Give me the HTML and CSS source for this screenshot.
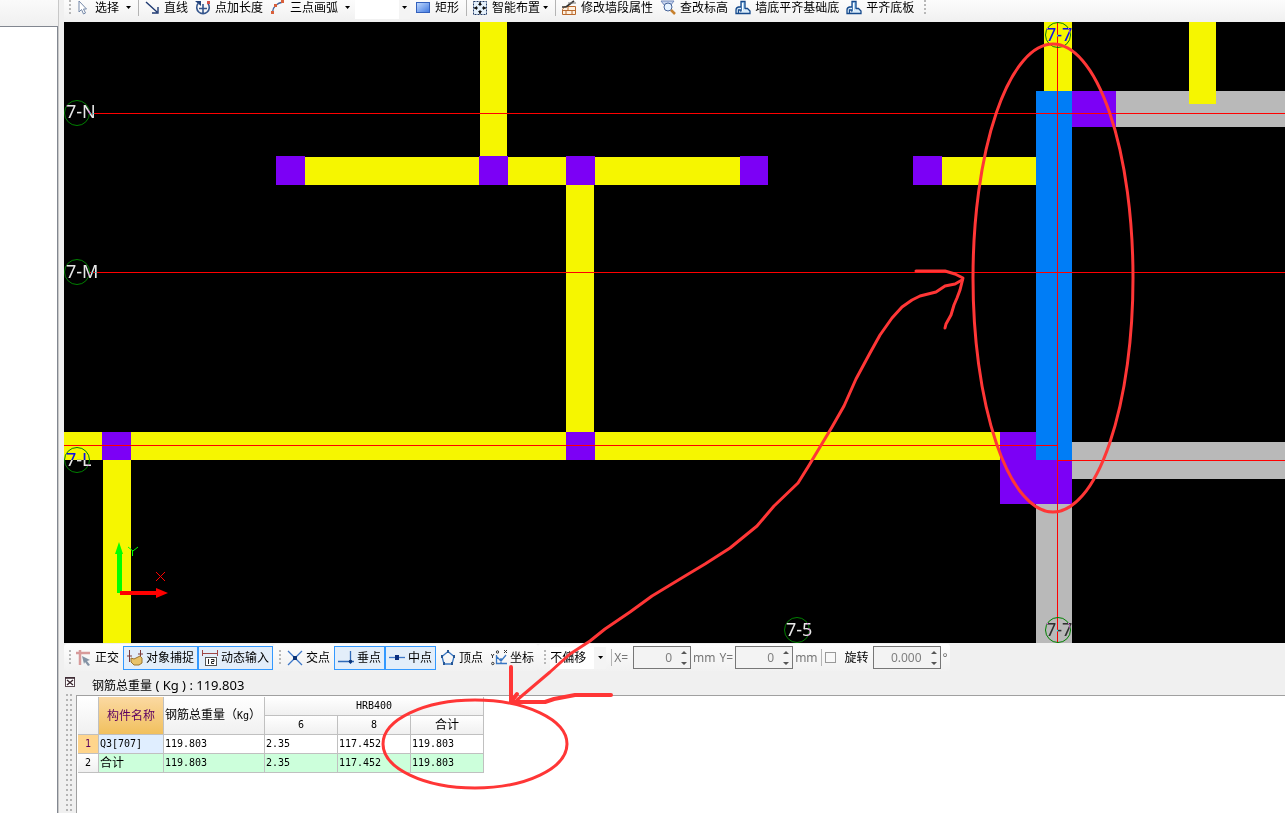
FILE: index.html
```html
<!DOCTYPE html>
<html lang="zh-CN">
<head>
<meta charset="utf-8">
<title>钢筋总重量</title>
<link rel="stylesheet" href="styles.css">
</head>
<body>
<svg class="defs" aria-hidden="true">
  <defs>
    <linearGradient id="blueFill" x1="0" y1="0" x2="1" y2="1"><stop offset="0" stop-color="#c4dcff"/><stop offset="1" stop-color="#3f78e0"/></linearGradient>
    <symbol id="align" viewBox="0 0 16 16"><path d="M6 1.500h4v11.500H6z" fill="#a9d2f4" stroke="#15498c" stroke-width="1.300"/><path d="M6 7H3.500Q1 7.500 1 10v3.500h2.500V10H6M10 8.500h2.500L15 11v2.500H4" fill="#d8ebfa" stroke="#15498c" stroke-width="1.300"/><path d="M7.500 3v8" stroke="#fff"/></symbol>
    <symbol id="spin" viewBox="0 0 8 16"><path d="M1 4l3-3 3 3zM1 12l3 3 3-3z" fill="#555"/></symbol>
  </defs>
</svg>
<div class="app">
  <aside class="side"><div class="side-head"></div><div class="side-body"></div></aside>
  <main class="main">
    <div class="bar top-bar" role="toolbar" aria-label="绘图">
      <span class="grip"></span>
      <button class="tool"><svg class="icon" viewBox="0 0 16 16"><path d="M4 1v11l2.500-2.500 2 4.500 2-1-2-4h3z" fill="#fff" stroke="#7488a8"/></svg>选择<i class="caret"></i></button>
      <span class="sep"></span>
      <button class="tool"><svg class="icon" viewBox="0 0 16 16"><path d="M2 2l11 10M14 7v6H8" fill="none" stroke="#1f3a72" stroke-width="1.400"/></svg>直线</button>
      <button class="tool"><svg class="icon" viewBox="0 0 16 16"><path d="M3 3.500a6.300 6.300 0 1 0 10 0M8 4v9M4 8.500h8" fill="none" stroke="#34558c" stroke-width="1.600"/><path d="M0 1h6v5z" fill="#23437c"/><path d="M12 1h3v3h-3z" fill="#d6524a"/></svg>点加长度</button>
      <button class="tool"><svg class="icon" viewBox="0 0 16 16"><path d="M2.500 12C3 7 7 3 13 2" fill="none" stroke="#44639c" stroke-width="1.500"/><path d="M1 11h3v3H1zM4 4h3v3H4zM11 0h3v3h-3z" fill="#d9603c"/></svg>三点画弧<i class="caret far"></i></button>
      <span class="combo blank"><select aria-label="画法"><option></option></select><i class="caret"></i></span>
      <button class="tool"><svg class="icon" viewBox="0 0 16 16"><rect x="1.500" y="2.500" width="13" height="10" fill="url(#blueFill)" stroke="#3461bd"/></svg>矩形</button>
      <span class="sep"></span>
      <button class="tool"><svg class="icon" viewBox="0 0 16 16"><rect x="1.500" y="1.500" width="13" height="13" fill="#e4f0fb" stroke="#223b66" stroke-dasharray="2 1"/><path d="M8 2v4M8 10v4M2 8h4M10 8h4" stroke="#111"/><path d="M6 5l2-3 2 3zM6 11l2 3 2-3zM5 6L2 8l3 2zM11 6l3 2-3 2z" fill="#111"/></svg>智能布置<i class="caret"></i></button>
      <span class="sep"></span>
      <button class="tool"><svg class="icon" viewBox="0 0 16 16"><path d="M3.500 6.500h11v8h-13v-5zM2 10.500h12M7 7v3M11 11v3M5 11v3" fill="#fff1e0" stroke="#b9692c"/><path d="M1 7h4l8-6" fill="none" stroke="#333" stroke-width="1.700"/><path d="M7 3h8" stroke="#777"/></svg>修改墙段属性</button>
      <button class="tool"><svg class="icon" viewBox="0 0 16 16"><path d="M1 1h13l-4 5H5z" fill="#c7d4ee" stroke="#7089bb"/><circle cx="8" cy="7" r="4" fill="#e7f3ff" stroke="#456398"/><path d="M11 10l4 4" stroke="#c7802c" stroke-width="2.500"/></svg>查改标高</button>
      <button class="tool"><svg class="icon"><use href="#align"/></svg>墙底平齐基础底</button>
      <button class="tool"><svg class="icon"><use href="#align"/></svg>平齐底板</button>
      <span class="grip tail"></span>
    </div>

    <svg class="canvas" role="img" aria-label="墙平面图">
      <g transform="translate(-64 -22)">
        <g fill="#f6f600">
          <path d="M480 22h27v135h-27zM276 157h492v28H276zM566 157h28v303h-28zM64 432h972v28H64zM103 432h28v260h-28zM913 157h123v28H913zM1044 22h28v70h-28z"/>
        </g>
        <g fill="#b9b9b9"><path d="M1116 91h2400v36H1116zM1072 442h2400v37H1072zM1036 504h36v200h-36z"/></g>
        <path d="M1189 22h27v82h-27z" fill="#f6f600"/>
        <path d="M276 156h29v29h-29zM479 156h29v29h-29zM566 156h29v29h-29zM740 156h28v29h-28zM913 156h29v29h-29zM102 432h29v28h-29zM566 432h29v28h-29zM1072 91h44v36h-44zM1000 432h72v72h-72z" fill="#7c00f6"/>
        <path d="M1036 91h36v369h-36z" fill="#007df6"/>
        <path d="M89 113.500H3500M89 272.500H3500M64 445.500H1057M1057 460.500H3500M1057.500 22V700" fill="none" stroke="#f00"/>
        <g fill="none" stroke="#008000">
          <circle cx="77" cy="113" r="12.500"/><circle cx="77" cy="272" r="12.500"/><circle cx="77" cy="460" r="12.500"/>
          <circle cx="1058" cy="35" r="12.500"/><circle cx="1058" cy="630" r="12.500"/><circle cx="797" cy="630" r="12.500"/>
        </g>
        <g class="axis-label">
          <text x="66" y="118">7-N</text><text x="66" y="278">7-M</text><text x="66" y="466">7-L</text>
          <text x="1046" y="41">7-7</text><text x="1046" y="636">7-7</text><text x="786" y="636">7-5</text>
        </g>
        <path d="M117 593v-39h-2l4-12 4 12h-1v39z" fill="#0f0"/>
        <path d="M120 591h36v-3l12 5-12 5v-3h-36z" fill="#f00"/>
        <path d="M128 547l5 4 5-4M132.500 551v5" fill="none" stroke="#0f0"/>
        <path d="M156 572l9 9M165 572l-9 9" stroke="#f00"/>
      </g>
    </svg>

    <div class="bar snap-bar" role="toolbar" aria-label="捕捉">
      <div class="group">
        <span class="grip"></span>
        <button class="tool"><svg class="icon" viewBox="0 0 16 16"><path d="M0 3h14M4 0v15" stroke="#d79a9a" stroke-width="2.500"/><path d="M6 6l8 4-3 1 3 4-2 1-3-4-1 2z" fill="#8493a5"/></svg>正交</button>
        <button class="tool on" aria-pressed="true"><svg class="icon" viewBox="0 0 16 16"><path d="M2.500 0v12M13.500 0v7M0 6h5M11 4h5" stroke="#7d3a3a"/><path d="M4 8l3 1 6-3 2 2v5l-3 2H7l-3-3z" fill="#e8c36a" stroke="#9a7431"/></svg>对象捕捉</button>
        <button class="tool on" aria-pressed="true"><svg class="icon" viewBox="0 0 16 16"><path d="M.500 0v6M15.500 0v6M0 3.500h16" stroke="#a04848"/><rect x="3.500" y="7.500" width="11" height="8" fill="#fff" stroke="#555"/><path d="M6.500 9v5M9 9.500h3v2H9.500v2H12" fill="none" stroke="#222"/></svg>动态输入</button>
      </div>
      <div class="group">
        <span class="grip"></span>
        <button class="tool"><svg class="icon" viewBox="0 0 16 16"><path d="M1 1l14 14M15 1L1 15" stroke="#3d77c8" stroke-width="1.300"/><rect x="6" y="6" width="4" height="4" fill="#0b3478"/></svg>交点</button>
        <button class="tool on" aria-pressed="true"><svg class="icon" viewBox="0 0 16 16"><path d="M0 11.500h16M12.500 1v13" stroke="#2e69b8" stroke-width="1.300"/><circle cx="12.500" cy="11.500" r="1.800" fill="#0b3478"/></svg>垂点</button>
        <button class="tool on" aria-pressed="true"><svg class="icon" viewBox="0 0 16 16"><path d="M0 7.500h16" stroke="#3d77c8" stroke-width="1.300"/><rect x="6" y="5" width="4" height="5" fill="#0b2f80"/></svg>中点</button>
        <button class="tool"><svg class="icon" viewBox="0 0 16 16"><path d="M8 1.500l6 5L12 14H4L2 6.500z" fill="none" stroke="#3977c3" stroke-width="1.300"/><path d="M7 0h2v3H7zM1 5h2v3H1zM13 5h2v3h-2zM3 12h2v3H3zM11 12h2v3h-2z" fill="#265795"/></svg>顶点</button>
        <button class="tool"><svg class="icon" viewBox="0 0 16 16"><path d="M5.500 5v8.500H16M5 6l5 5 5-6M10 8v5" fill="none" stroke="#3977c3" stroke-width="1.300"/><path d="M0 4l1.500 2L3 4M1.500 6v2M13 0l3 3M16 0l-3 3" fill="none" stroke="#333"/><circle cx="6.500" cy="2" r="1.200" fill="none" stroke="#333"/><circle cx="1.800" cy="13.500" r="1.200" fill="none" stroke="#333"/></svg>坐标</button>
      </div>
      <div class="group">
        <span class="grip"></span>
        <span class="combo offset"><select aria-label="偏移方式"><option>不偏移</option></select><i class="caret"></i></span>
        <span class="sep"></span>
        <label class="unit first" for="dx">X=</label>
        <span class="spin"><input id="dx" value="0" disabled><svg class="arrows" aria-hidden="true"><use href="#spin"/></svg></span>
        <span class="unit">mm</span>
        <label class="unit" for="dy">Y=</label>
        <span class="spin"><input id="dy" value="0" disabled><svg class="arrows" aria-hidden="true"><use href="#spin"/></svg></span>
        <span class="unit">mm</span>
        <span class="sep tight"></span>
        <label class="check"><input type="checkbox" disabled>旋转</label>
        <span class="spin wide"><input id="angle" aria-label="旋转角度" value="0.000" disabled><svg class="arrows" aria-hidden="true"><use href="#spin"/></svg></span>
        <span class="unit">°</span>
      </div>
    </div>

    <section class="dock">
      <div class="rail">
        <button class="close" aria-label="关闭"><svg viewBox="0 0 10 10"><rect x=".500" y=".500" width="9" height="9" fill="#fff" stroke="#5a4a52"/><path d="M2 3l6 5M8 3L2 8M0 1h10" stroke="#3b2730" stroke-width="1.400"/></svg></button>
        <div class="dots"></div>
      </div>
      <div class="panel">
        <h1 class="summary">钢筋总重量<span class="amount"> ( Kg ) : 119.803</span></h1>
        <div class="sheet">
          <table>
            <colgroup><col class="c-no"><col class="c-name"><col class="c-sum"><col class="c-val"><col class="c-val"><col class="c-val"></colgroup>
            <thead>
              <tr><th rowspan="2"></th><th rowspan="2" class="picked">构件名称</th><th rowspan="2" class="left">钢筋总重量（<span class="num">Kg</span>）</th><th colspan="3" class="num">HRB400</th></tr>
              <tr><th class="num">6</th><th class="num">8</th><th>合计</th></tr>
            </thead>
            <tbody>
              <tr><th class="num current">1</th><td class="num active">Q3[707]</td><td class="num">119.803</td><td class="num">2.35</td><td class="num">117.452</td><td class="num">119.803</td></tr>
              <tr class="total"><th class="num">2</th><td>合计</td><td class="num">119.803</td><td class="num">2.35</td><td class="num">117.452</td><td class="num">119.803</td></tr>
            </tbody>
          </table>
        </div>
      </div>
    </section>
  </main>
  <svg class="markup" aria-hidden="true">
    <g fill="none" stroke="#ff3636" stroke-width="3" stroke-linecap="round" stroke-linejoin="round">
      <ellipse cx="1053" cy="278" rx="80" ry="234"/>
      <ellipse cx="475" cy="744" rx="92" ry="44"/>
      <path d="M916 271h29l10 3 8 4-3 12-3 8-3 7-3 10-5 9-1 4"/>
      <path d="M962 280l-7 4-10 2-9 6-16 4-8 4-10 7-10 11-12 17-10 18-14 26-12 27-12 21-24 40-10 16-24 23-17 20-27 22-25 16-20 12-33 20-22 16-25 17-15 12-20 13-20 18-33 28"/>
      <path d="M511 667v35h34l9-3 21-4h36M511 702l6-8" stroke-width="4"/>
    </g>
  </svg>
</div>
</body>
</html>
```
FILE: styles.css
```css
* { box-sizing: border-box; }

body {
  margin: 0;
  background: #f0f0f0;
  color: #000;
  font: 12px/16px "Noto Sans", "Noto Sans CJK SC", sans-serif;
}

button, input, select { font: inherit; color: inherit; }

.defs { position: absolute; width: 0; height: 0; }

.app {
  position: relative;
  display: flex;
  height: 100vh;
  overflow: hidden;
}

.side {
  flex: none;
  display: flex;
  flex-direction: column;
  width: 59px;
  margin-right: 5px;
  border-right: 1px solid #c8c8c8;
}
.side-head { height: 26px; background: linear-gradient(#fafafa, #f0f0f0); }
.side-body {
  flex: 1;
  background: #fff;
  border: 1px solid #828790;
  border-width: 1px 1px 0 0;
}

.main {
  flex: 1;
  min-width: 0;
  display: flex;
  flex-direction: column;
}

.bar {
  flex: none;
  display: flex;
  align-items: center;
  white-space: nowrap;
}
.top-bar {
  height: 22px;
  padding-bottom: 7px;
  background: linear-gradient(#fcfcfc, #f0f0f0);
}
.snap-bar { height: 29px; }

.group {
  display: flex;
  align-items: center;
  height: 27px;
  border-radius: 3px;
  background: linear-gradient(#fdfdfd, #f1f1f1);
}

.grip {
  flex: none;
  width: 2px;
  height: 15px;
  margin: 0 1px 0 5px;
  background: repeating-linear-gradient(#b8b8b8 0 2px, transparent 2px 4px);
}
.grip.tail { margin-left: 8px; }
.snap-bar .group + .group .grip { margin: 0 2px 0 6px; }

.sep {
  flex: none;
  width: 1px;
  height: 17px;
  margin-left: 5px;
  background: #b4b4b4;
}
.sep.tight { margin-left: 1px; }

.tool {
  flex: none;
  display: flex;
  align-items: center;
  gap: 4px;
  padding: 0 2px 0 5px;
  border: 0;
  background: none;
}
.top-bar .grip + .tool { padding-left: 3px; }
.snap-bar .tool {
  gap: 3px;
  height: 24px;
  padding: 0 3px;
  border: 1px solid transparent;
}
.snap-bar .tool.on { border-color: #3399ff; background: #e3eefa; }

.icon { flex: none; width: 16px; height: 16px; }

.caret {
  flex: none;
  width: 5px;
  height: 3px;
  background: #000;
  clip-path: polygon(0 0, 100% 0, 50% 100%);
}
.tool .caret { margin-left: -1px; }
.tool .caret.far, .tool:nth-child(2) .caret { margin-left: 3px; }

.combo {
  display: flex;
  align-items: center;
  background: linear-gradient(90deg, #fff 0 44px, #f4f4f4 44px);
}
.combo select {
  flex: 1;
  min-width: 0;
  padding: 0;
  border: 0;
  background: none;
  appearance: none;
}
.combo .caret { margin-right: 3px; }
.combo.blank { width: 55px; height: 22px; margin-left: 3px; }
.combo.offset { width: 56px; height: 22px; margin-left: 2px; }

.unit { color: #777; margin: 0 2px; }
.unit.first { margin-right: 5px; }
.spin {
  display: flex;
  align-items: center;
  width: 58px;
  height: 23px;
  border: 1px solid #777;
  background: #f3f3f3;
}
.spin.wide { width: 68px; margin-left: 4px; }
.spin input {
  flex: 1;
  min-width: 0;
  padding: 0;
  border: 0;
  background: none;
  color: #808080;
  text-align: right;
}
.arrows { width: 8px; height: 16px; margin: 0 2px 0 8px; }
.check { display: flex; align-items: center; gap: 9px; }
.check input {
  appearance: none;
  width: 11px;
  height: 11px;
  margin: 0 0 0 3px;
  border: 1px solid #999;
  background: #f8f8f8;
}

.canvas {
  flex: 1;
  width: 100%;
  min-height: 0;
  background: #000;
}
.axis-label {
  fill: #e8e8e8;
  font: 18px "Noto Sans", sans-serif;
  mix-blend-mode: difference;
}

.dock { flex: none; display: flex; height: 141px; }
.rail {
  display: flex;
  flex-direction: column;
  width: 12px;
  padding: 5px 1px 0;
}
.close {
  width: 10px;
  height: 10px;
  padding: 0;
  border: 0;
  background: none;
}
.close svg { display: block; }
.dots {
  flex: 1;
  margin: 4px 1px 0;
  background:
    repeating-linear-gradient(#f0f0f0 0 3px, transparent 3px 5px),
    repeating-linear-gradient(90deg, #b4b4b4 0 2px, #f0f0f0 2px 4px);
}

.panel { flex: 1; display: flex; flex-direction: column; }
.summary {
  margin: 0;
  padding: 5px 16px 1px;
  font-size: 12px;
  font-weight: 400;
}
.amount { font-size: 13px; }
.sheet {
  flex: 1;
  padding: 1px 0 0 1px;
  border: 1px solid #a0a0a0;
  border-width: 1px 0 0 1px;
  background: #fff;
}

table {
  table-layout: fixed;
  width: 406px;
  border-collapse: separate;
  border-spacing: 0;
  line-height: 18px;
}
.c-no { width: 21px; }
.c-name { width: 65px; }
.c-sum { width: 101px; }
.c-val { width: 73px; }
th, td {
  height: 19px;
  padding: 0 1px;
  border: 1px solid #c0c0c0;
  border-width: 0 1px 1px 0;
  font-weight: 400;
  text-align: left;
  white-space: nowrap;
}
th { text-align: center; background: linear-gradient(#fff, #f0f0f0); }
th.left { text-align: left; }
th.picked { background: linear-gradient(#fbd9a2, #f1c05e); color: #5c0060; }
th.current { background: #ffd58c; color: #5c0060; }
td.active { background: #e0eeff; }
.total td { background: #ccffdb; }
.num { font-family: "DejaVu Sans Mono", monospace; font-size: 10px; }

.markup {
  position: absolute;
  inset: 0;
  width: 100%;
  height: 100%;
  pointer-events: none;
}
```
